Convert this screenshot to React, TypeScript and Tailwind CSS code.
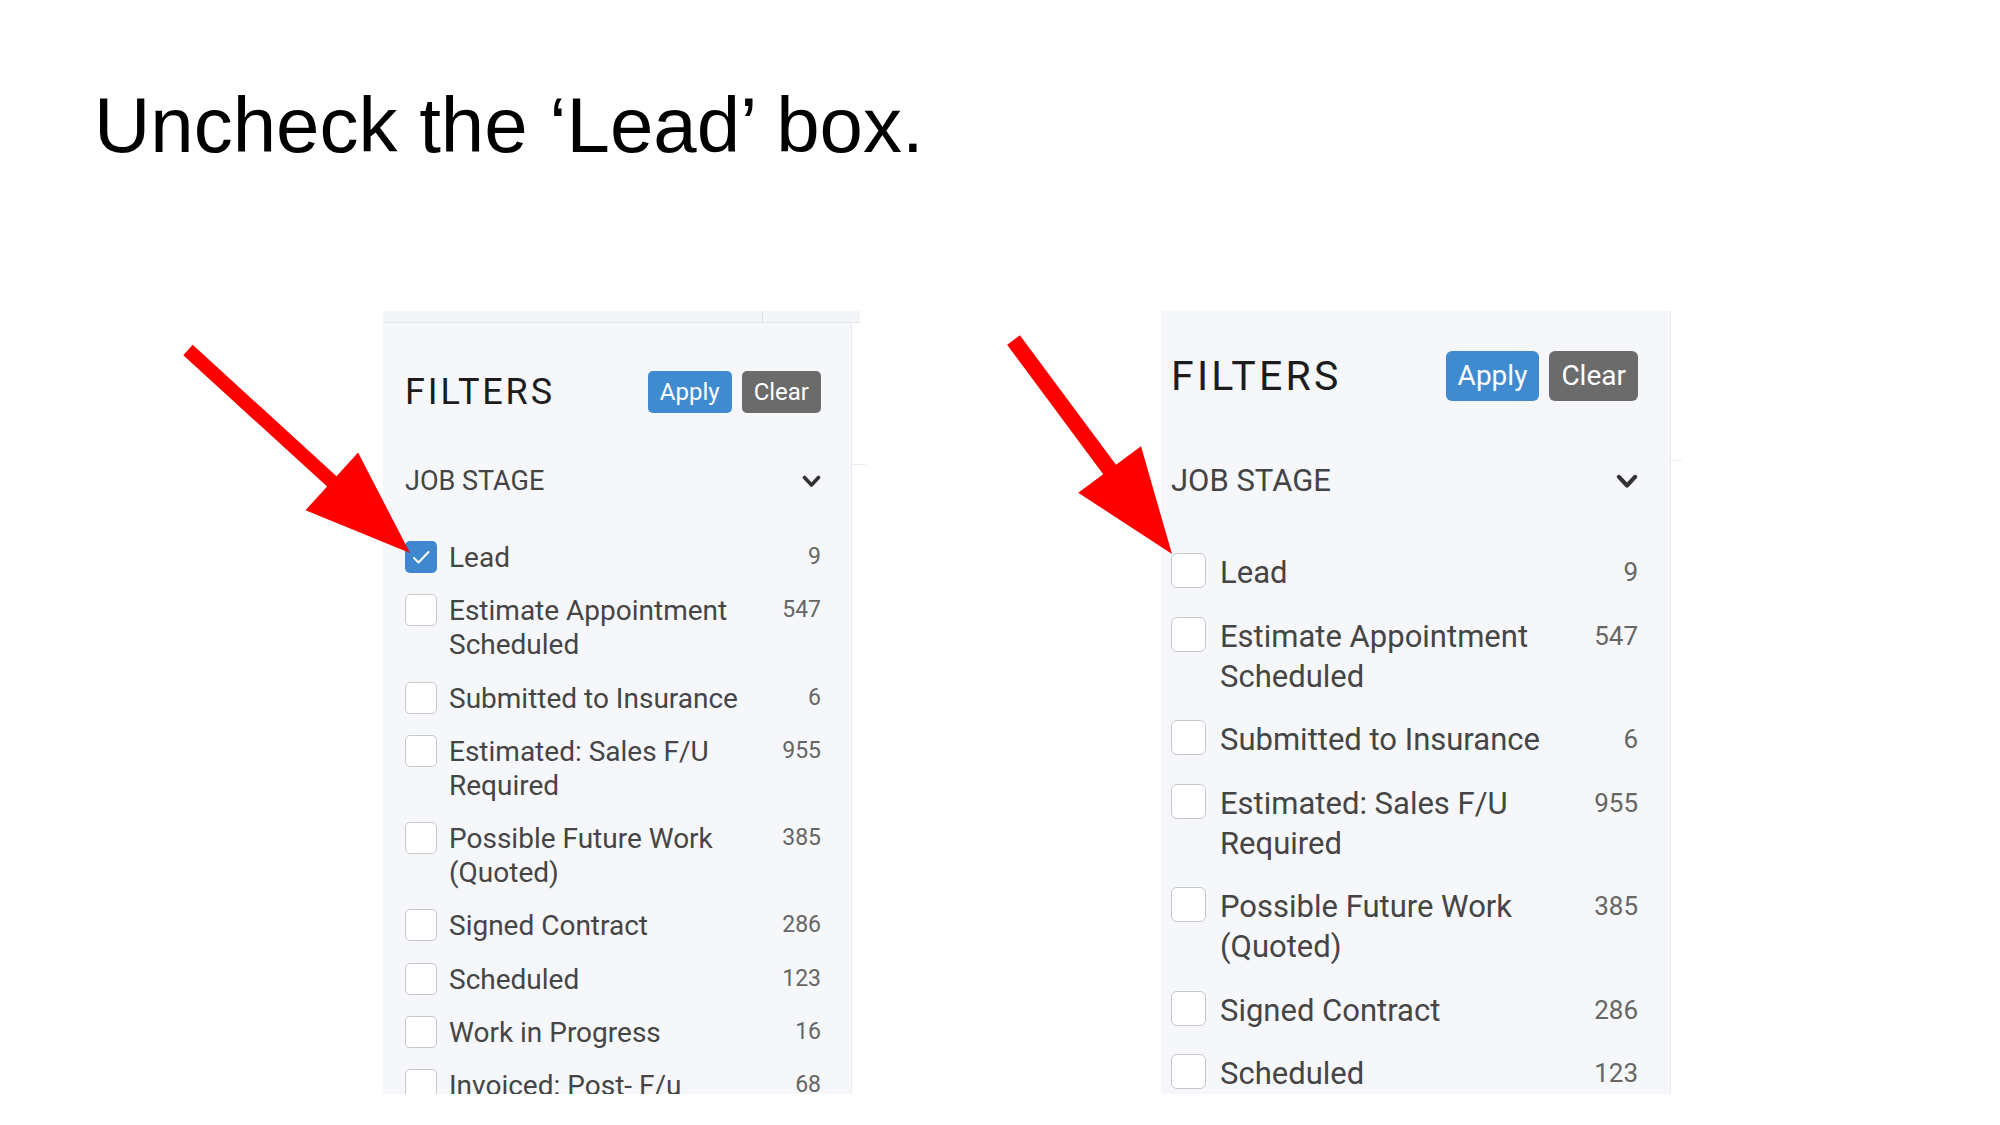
import React from "react";

type Item = { label: string; count: number };

const jobStages: Item[] = [
  { label: "Lead", count: 9 },
  { label: "Estimate Appointment Scheduled", count: 547 },
  { label: "Submitted to Insurance", count: 6 },
  { label: "Estimated: Sales F/U Required", count: 955 },
  { label: "Possible Future Work (Quoted)", count: 385 },
  { label: "Signed Contract", count: 286 },
  { label: "Scheduled", count: 123 },
  { label: "Work in Progress", count: 16 },
  { label: "Invoiced: Post- F/u", count: 68 },
];

// two crops of the same sidebar, the right one shown a bit bigger
const sizes = {
  sm: {
    panel: "w-[469px] pl-[22px] pr-[30px] pt-[48px]",
    title: "text-[36px]",
    btn: "h-[42px] px-3 text-[24px] rounded-[5px]",
    section: "mt-[51px] h-[34px] text-[27px]",
    chevron: "w-[19px] h-[13px]",
    list: "mt-[43px] gap-[19.25px]",
    box: "w-[32px] h-[32px] mr-[12px] rounded-[5px]",
    label: "text-[28px] leading-[34px]",
    count: "w-[60px] text-[23px] leading-[32px]",
  },
  lg: {
    panel: "w-[510px] pl-[10px] pr-[32px] pt-[40px]",
    title: "text-[41px]",
    btn: "h-[50px] px-3 text-[28px] rounded-[6px]",
    section: "mt-[60px] h-[40px] text-[31px]",
    chevron: "w-[22px] h-[15px]",
    list: "mt-[52px] gap-[23.5px]",
    box: "w-[35px] h-[35px] mr-[14px] rounded-[6px]",
    label: "text-[31px] leading-[40px]",
    count: "w-[70px] text-[26px] leading-[38px]",
  },
};

const Checkbox = ({ checked, className }: { checked: boolean; className: string }) =>
  checked ? (
    <div className={`${className} shrink-0 bg-[#3f88d0] flex items-center justify-center`}>
      <svg viewBox="0 0 32 32" className="w-full h-full">
        <polyline points="9,17 13.5,21.5 23.5,11" fill="none" stroke="white" strokeWidth="2" strokeLinecap="round" strokeLinejoin="round" />
      </svg>
    </div>
  ) : (
    <div className={`${className} shrink-0 bg-white border-[1.5px] border-[#c6c8cc]`} />
  );

const FilterPanel = ({ size, leadChecked }: { size: "sm" | "lg"; leadChecked: boolean }) => {
  const s = sizes[size];
  return (
    <div className={`${s.panel} h-full bg-[#f5f7fb] border-r border-[#e8eaee] overflow-hidden font-[Roboto,sans-serif]`}>
      <div className="flex items-center justify-between">
        <h2 className={`${s.title} leading-none tracking-[0.08em] text-[#1c1c1c]`}>FILTERS</h2>
        <div className="flex gap-[10px]">
          <button className={`${s.btn} bg-[#408ad0] text-white`}>Apply</button>
          <button className={`${s.btn} bg-[#6b6b6b] text-white`}>Clear</button>
        </div>
      </div>

      <div className={`${s.section} flex items-center justify-between text-[#444]`}>
        <span>JOB STAGE</span>
        <svg viewBox="0 0 19 13" className={s.chevron}>
          <polyline points="2.5,2.5 9.5,10 16.5,2.5" fill="none" stroke="#333" strokeWidth="3.6" strokeLinecap="round" strokeLinejoin="round" />
        </svg>
      </div>

      <div className={`${s.list} flex flex-col`}>
        {jobStages.map((item, i) => (
          <div key={item.label} className="flex items-start">
            <Checkbox checked={leadChecked && i === 0} className={s.box} />
            <span className={`${s.label} flex-1 text-[#454545]`}>{item.label}</span>
            <span className={`${s.count} text-right text-[#666]`}>{item.count}</span>
          </div>
        ))}
      </div>
    </div>
  );
};

export default function App() {
  return (
    <div className="relative w-[2000px] h-[1125px] bg-white overflow-hidden">
      <h1 className="pl-[94px] pt-[86px] text-[78px] leading-none text-black font-['Liberation_Sans',Arial,sans-serif]">
        Uncheck the ‘Lead’ box.
      </h1>

      <div className="flex mt-[147px]">
        {/* left crop */}
        <div className="ml-[383px] w-[483px] h-[783px] flex flex-col">
          <div className="h-[12px] w-[477px] bg-[#f3f5f9] border-b border-[#e3e5ea] flex">
            <div className="w-[380px] border-r border-[#dcdee3]" />
          </div>
          <div className="flex flex-1 min-h-0">
            <FilterPanel size="sm" leadChecked />
            <div className="w-[14px]">
              <div className="mt-[141px] border-t border-[#eceef1]" />
            </div>
          </div>
        </div>

        {/* right crop */}
        <div className="ml-[295px] w-[521px] h-[783px] flex">
          <FilterPanel size="lg" leadChecked={false} />
          <div className="w-[11px]">
            <div className="mt-[149px] border-t border-[#eceef1]" />
          </div>
        </div>
      </div>

      {/* red pointer arrows */}
      <svg className="absolute inset-0 pointer-events-none" width="2000" height="1125" viewBox="0 0 2000 1125">
        <polygon
          fill="#ff0000"
          points="183.3,355.2 327.1,486.6 305.5,510.2 410,553 358.1,452.6 336.5,476.2 192.7,344.8"
        />
        <polygon
          fill="#ff0000"
          points="1007.1,344.8 1103.2,474.3 1078.2,492.7 1172,554 1141,446.3 1116,464.7 1019.9,335.2"
        />
      </svg>
    </div>
  );
}
